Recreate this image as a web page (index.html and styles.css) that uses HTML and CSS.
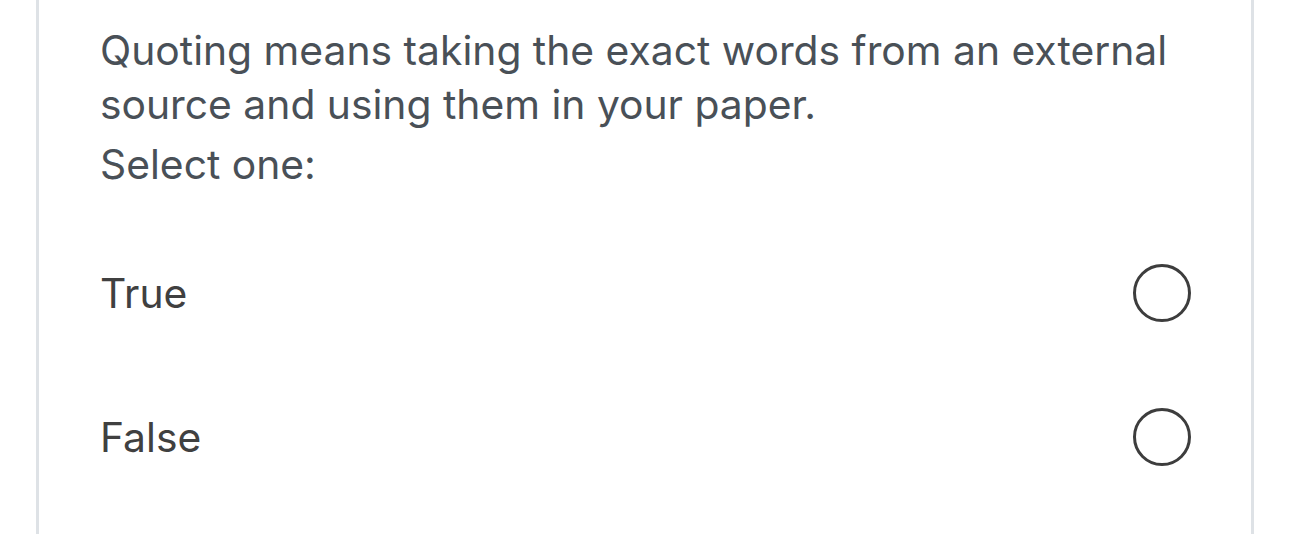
FILE: index.html
```html
<!DOCTYPE html>
<html lang="en">
<head>
    <title>Question</title>
    <link rel="stylesheet" href="styles.css">
</head>
<body>

    <div class="question">
        <div class="qtext">
            <p class="prompt">Quoting means taking the exact words from an external source and using them in your paper.</p>
            <p class="select">Select one:</p>
        </div>

        <div class="answers">
            <label class="answer">
                <span class="label">True</span>
                <span class="radio"></span>
            </label>
            <label class="answer">
                <span class="label">False</span>
                <span class="radio"></span>
            </label>
        </div>
    </div>

</body>
</html>
```
FILE: styles.css
```css
body {
    margin: 0;
    background: #fff;
    font-family: Inter, "Noto Sans", sans-serif;
    overflow: hidden;
}

.question {
    margin-left: 36px;
    width: 1218px;
    height: 534px;
    border-left: 3px solid #dee2e6;
    border-right: 3px solid #dee2e6;
    padding: 23px 60px 0 61px;
    box-sizing: border-box;
}

.qtext {
    color: #495057;
    font-size: 40.8px;
    line-height: 54px;
}

.prompt {
    margin: 0;
    max-width: 1080px;
}

.select {
    margin: 6px 0 0;
}

.answers {
    margin-top: 30px;
}

.answer {
    display: flex;
    justify-content: space-between;
    align-items: center;
    height: 144px;
    color: #404040;
    font-size: 40.8px;
}

.radio {
    width: 58px;
    height: 58px;
    border: 3px solid #3d3d3d;
    border-radius: 50%;
    box-sizing: border-box;
}
```
